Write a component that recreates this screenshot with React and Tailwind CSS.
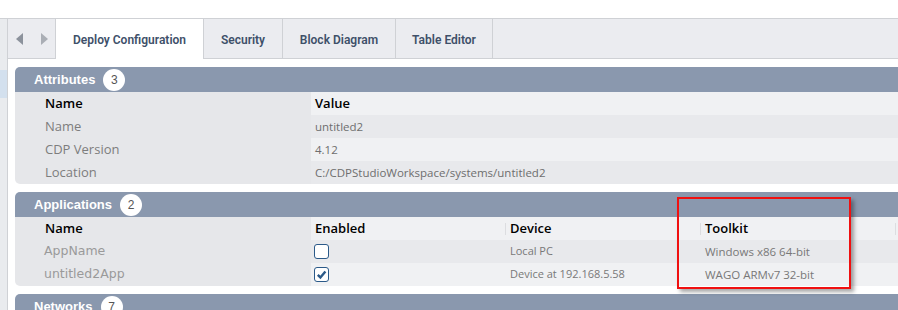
export default function App() {
  const cell = "font-['Open_Sans',sans-serif] text-[13px]";

  const attrRows = [
    ["Name", "untitled2", "bg-[#e8e9ec]"],
    ["CDP Version", "4.12", "bg-[#f0f1f3]"],
    ["Location", "C:/CDPStudioWorkspace/systems/untitled2", "bg-[#e8e9ec]"],
  ];

  const apps = [
    { name: "AppName", on: false, device: "Local PC", kit: "Windows x86 64-bit", bg: "bg-[#e8e9ec]" },
    { name: "untitled2App", on: true, device: "Device at 192.168.5.58", kit: "WAGO ARMv7 32-bit", bg: "bg-[#f0f1f3]" },
  ];

  const SectionHeader = ({ title, count }) => (
    <div className="flex h-[25px] items-center rounded-tl-[5px] bg-[#8a98ae] pl-[19px]">
      <span className="font-['Liberation_Sans',Arial,sans-serif] text-[13px] font-bold text-white">
        {title}
      </span>
      <span className="ml-[8px] flex h-[22px] w-[22px] items-center justify-center rounded-full bg-white font-['Liberation_Sans',Arial,sans-serif] text-[12px] text-[#555]">
        {count}
      </span>
    </div>
  );

  return (
    <div className="relative h-[310px] w-[898px] overflow-hidden bg-white">
      <div className="h-[18px]" />
      <div className="flex h-[292px] border-t border-[#cfd1d5]">
        {/* LEFT STRIP */}
        <div className="flex w-[8px] shrink-0 flex-col border-r border-[#cfd1d5] bg-[#e9ebee]">
          <div className="h-[51px] shrink-0" />
          <div className="h-[28px] shrink-0 bg-[#d3e0ee]" />
        </div>

        <div className="flex min-w-0 flex-1 flex-col">
          {/* TABS */}
          <div className="flex h-[40px] shrink-0 bg-[#ebecf0] font-['Roboto',Arial,sans-serif] text-[12px] font-semibold text-[#3e5069]">
            <div className="flex w-[48px] items-center gap-[18px] border-r border-b border-[#cfd1d5] pl-[8px]">
              <svg width="7" height="12" viewBox="0 0 7 12">
                <path d="M7 0 L0 6 L7 12 Z" fill="#8c929c" />
              </svg>
              <svg width="7" height="12" viewBox="0 0 7 12">
                <path d="M0 0 L7 6 L0 12 Z" fill="#aaaeb5" />
              </svg>
            </div>
            <div className="flex w-[148px] items-center justify-center border-r border-[#cfd1d5] bg-white pt-[2px]">
              Deploy Configuration
            </div>
            <div className="flex w-[79px] items-center justify-center border-r border-b border-[#cfd1d5] pt-[2px]">
              Security
            </div>
            <div className="flex w-[113px] items-center justify-center border-r border-b border-[#cfd1d5] pt-[2px]">
              Block Diagram
            </div>
            <div className="flex w-[97px] items-center justify-center border-r border-b border-[#cfd1d5] pt-[2px]">
              Table Editor
            </div>
            <div className="flex-1 border-b border-[#cfd1d5]" />
          </div>

          {/* CONTENT */}
          <div className="flex flex-col gap-[8px] pt-[8px] pl-[7px]">
            {/* Attributes */}
            <div>
              <SectionHeader title="Attributes" count="3" />
              <div className={`flex h-[23px] ${cell}`}>
                <div className="flex w-[296px] items-center bg-[#e6e7ea] pl-[30px] font-semibold text-black">Name</div>
                <div className="flex flex-1 items-center bg-[#f0f1f3] pl-[4px] font-semibold text-black">Value</div>
              </div>
              {attrRows.map(([k, v, bg], i) => (
                <div key={k} className={`flex h-[23px] ${cell}`}>
                  <div
                    className={`flex w-[296px] items-center bg-[#e6e7ea] pl-[30px] text-[#7d7d7d] ${
                      i === attrRows.length - 1 ? "rounded-bl-[5px]" : ""
                    }`}
                  >
                    {k}
                  </div>
                  <div className={`flex flex-1 items-center pl-[4px] text-[11.5px] text-[#6e6e6e] ${bg}`}>{v}</div>
                </div>
              ))}
            </div>

            {/* Applications */}
            <div>
              <SectionHeader title="Applications" count="2" />
              <div className={`flex h-[23px] ${cell} font-semibold text-black`}>
                <div className="flex w-[296px] items-center bg-[#e6e7ea] pl-[30px]">Name</div>
                <div className="flex w-[194px] items-center bg-[#f0f1f3] pl-[4px]">Enabled</div>
                <div className="flex w-[195px] items-center bg-[#f0f1f3]">
                  <span className="mr-[4px] h-[12px] w-px bg-[#dcdde0]" />
                  Device
                </div>
                <div className="flex w-[195px] items-center bg-[#f0f1f3]">
                  <span className="mr-[4px] h-[12px] w-px bg-[#dcdde0]" />
                  Toolkit
                </div>
                <div className="flex flex-1 items-center bg-[#f0f1f3]">
                  <span className="h-[12px] w-px bg-[#dcdde0]" />
                </div>
              </div>
              {apps.map((a, i) => (
                <div key={a.name} className={`flex h-[23px] ${cell}`}>
                  <div
                    className={`flex w-[296px] items-center bg-[#e6e7ea] pl-[29px] font-['DejaVu_Sans',sans-serif] text-[12.5px] text-[#9a9a9a] ${
                      i === apps.length - 1 ? "rounded-bl-[5px]" : ""
                    }`}
                  >
                    {a.name}
                  </div>
                  <div className={`flex flex-1 items-center text-[#787878] ${a.bg}`}>
                    <div className="flex w-[194px] items-center pl-[3px]">
                      <span className="flex h-[15px] w-[15px] items-center justify-center rounded-[3px] border-[1.5px] border-[#2b5a89] bg-white">
                        {a.on && (
                          <svg width="11" height="11" viewBox="0 0 11 11">
                            <path d="M1.8 5.8 L4.4 8.4 L9.4 2.4" fill="none" stroke="#2b5a89" strokeWidth="2.4" />
                          </svg>
                        )}
                      </span>
                    </div>
                    <div className="w-[195px] pl-[5px] text-[11px]">{a.device}</div>
                    <div className="w-[195px] pl-[5px] text-[11.5px]">{a.kit}</div>
                  </div>
                </div>
              ))}
            </div>

            {/* Networks */}
            <div>
              <SectionHeader title="Networks" count="7" />
            </div>
          </div>
        </div>
      </div>

      {/* highlight box */}
      <div className="absolute top-[197px] left-[677px] h-[92px] w-[174px] border-2 border-[#f01010] shadow-[3px_3px_4px_rgba(0,0,0,0.35)]" />
    </div>
  );
}
